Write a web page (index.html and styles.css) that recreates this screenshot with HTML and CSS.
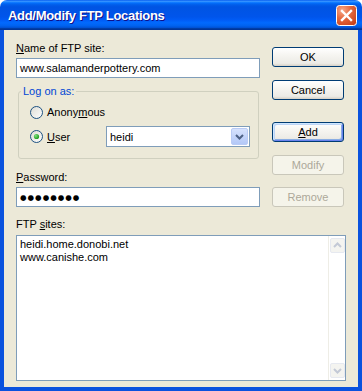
FILE: index.html
```html
<!DOCTYPE html>
<html>
<head>
<meta charset="utf-8">
<title>Add/Modify FTP Locations</title>
<link rel="stylesheet" href="styles.css">
</head>
<body>
<div class="window">
  <div class="titlebar">
    <span class="title">Add/Modify FTP Locations</span>
    <button class="close" aria-label="Close">
      <svg width="21" height="21" viewBox="0 0 21 21">
        <defs>
          <radialGradient id="cg" cx="0.3" cy="0.25" r="0.9">
            <stop offset="0" stop-color="#F7A98A"/>
            <stop offset="0.45" stop-color="#E5693F"/>
            <stop offset="1" stop-color="#C8401A"/>
          </radialGradient>
        </defs>
        <rect x="0.5" y="0.5" width="20" height="20" rx="3" fill="url(#cg)" stroke="#fff"/>
        <path d="M6 6L15 15M15 6L6 15" stroke="#fff" stroke-width="2.4" stroke-linecap="square"/>
      </svg>
    </button>
  </div>
  <div class="frame">
    <div class="top">
      <div class="form">
        <label class="lbl lbl-name"><u>N</u>ame of FTP site:</label>
        <div class="field">www.salamanderpottery.com</div>
        <fieldset class="group">
          <legend>Log on as:</legend>
          <div class="group-body">
            <div class="radio-row">
              <svg class="radio" width="13" height="13" viewBox="0 0 13 13">
                <defs>
                  <linearGradient id="rg" x1="0" y1="0" x2="1" y2="1">
                    <stop offset="0" stop-color="#DCDBD3"/>
                    <stop offset="1" stop-color="#FFFFFF"/>
                  </linearGradient>
                </defs>
                <circle cx="6.5" cy="6.5" r="6" fill="url(#rg)" stroke="#1C5180"/>
              </svg>
              <span>Anony<u>m</u>ous</span>
            </div>
            <div class="radio-row user-row">
              <svg class="radio" width="13" height="13" viewBox="0 0 13 13">
                <defs>
                  <radialGradient id="dg" cx="0.35" cy="0.35" r="0.7">
                    <stop offset="0" stop-color="#7EE07E"/>
                    <stop offset="1" stop-color="#1A9A1A"/>
                  </radialGradient>
                </defs>
                <circle cx="6.5" cy="6.5" r="6" fill="url(#rg)" stroke="#1C5180"/>
                <circle cx="6.5" cy="6.5" r="2.6" fill="url(#dg)"/>
              </svg>
              <span class="user-lbl"><u>U</u>ser</span>
              <div class="combo">
                <span class="combo-text">heidi</span>
                <span class="dd">
                  <svg width="15" height="15" viewBox="0 0 15 15">
                    <path d="M4 6L7.5 9.5L11 6" fill="none" stroke="#4D6185" stroke-width="2"/>
                  </svg>
                </span>
              </div>
            </div>
          </div>
        </fieldset>
        <label class="lbl lbl-pw"><u>P</u>assword:</label>
        <div class="field pw"><span class="dots">●●●●●●●●</span></div>
      </div>
      <div class="buttons">
        <button class="btn b-ok">OK</button>
        <button class="btn b-cancel">Cancel</button>
        <button class="btn b-add focus"><u>A</u>dd</button>
        <button class="btn b-modify" disabled>Modify</button>
        <button class="btn b-remove" disabled>Remove</button>
      </div>
    </div>
    <label class="lbl lbl-sites">FTP <u>s</u>ites:</label>
    <div class="list">
      <div class="items">
        <div class="item">heidi.home.donobi.net</div>
        <div class="item">www.canishe.com</div>
      </div>
      <div class="scrollbar">
        <span class="sb-btn">
          <svg width="13" height="13" viewBox="0 0 13 13"><path d="M3 8L6.5 4.5L10 8" fill="none" stroke="#C3C9D6" stroke-width="2"/></svg>
        </span>
        <span class="sb-btn">
          <svg width="13" height="13" viewBox="0 0 13 13"><path d="M3 5L6.5 8.5L10 5" fill="none" stroke="#C3C9D6" stroke-width="2"/></svg>
        </span>
      </div>
    </div>
  </div>
</div>
</body>
</html>
```

FILE: styles.css
```css
* { box-sizing: border-box; }
html, body { margin: 0; padding: 0; background: #ffffff; }
body {
  font-family: "Liberation Sans", Arial, sans-serif;
  font-size: 11px;
  color: #000;
}
u { text-decoration: underline; text-underline-offset: 1px; }

.window {
  width: 362px;
  height: 391px;
  display: flex;
  flex-direction: column;
}

.titlebar {
  flex: none;
  height: 30px;
  display: flex;
  align-items: center;
  justify-content: space-between;
  padding: 1px 5px 0 8px;
  border-radius: 7px 7px 0 0;
  background: linear-gradient(to bottom,
    #0058EE 0%, #3A93FF 4%, #288EFF 6%, #127DFF 8%, #036FFC 10%,
    #0262EE 14%, #0057E5 20%, #0054E3 24%, #0055EB 56%, #005BF5 66%,
    #026AFE 76%, #0062EF 86%, #0052D6 92%, #0040AB 94%, #003092 100%);
}
.title {
  color: #fff;
  font-weight: bold;
  font-size: 13px;
  letter-spacing: -0.3px;
  text-shadow: 1px 1px #0F1089;
}
.close {
  width: 21px;
  height: 21px;
  padding: 0;
  border: 0;
  background: none;
  display: block;
  margin-top: -1px;
}
.close svg { display: block; }

.frame {
  flex: 1;
  background: #ECE9D8;
  border: 4px solid #0A52DE;
  border-top: 0;
  padding: 11px 12px 6px 12px;
  display: flex;
  flex-direction: column;
}

.top { display: flex; gap: 12px; }
.form { width: 244px; display: flex; flex-direction: column; }
.buttons { width: 72px; display: flex; flex-direction: column; }

.lbl { display: block; line-height: 14px; height: 14px; }
.field {
  margin-top: 3px;
  height: 20px;
  border: 1px solid #7F9DB9;
  background: #fff;
  padding: 0 3px;
  display: flex;
  align-items: center;
}
.pw .dots { font-family: "DejaVu Sans", sans-serif; font-size: 7.5px; letter-spacing: 1px; }

.group {
  margin: 7px 1px 0 2px;
  padding: 0;
  border: 1px solid #D0D0BF;
  border-radius: 3px;
  min-width: 0;
}
.group legend {
  color: #0046D5;
  padding: 0 2px;
  margin-left: 2px;
  line-height: 13px;
}
.group-body {
  padding: 4px 8px 11px 11px;
  display: flex;
  flex-direction: column;
  gap: 4px;
}
.radio-row { display: flex; align-items: center; gap: 4px; height: 20px; }
.radio { display: block; flex: none; }
.user-row { height: 21px; }
.user-lbl { flex: 1; }
.combo {
  width: 144px;
  height: 21px;
  border: 1px solid #7F9DB9;
  background: #fff;
  display: flex;
  align-items: center;
  padding-left: 3px;
}
.combo-text { flex: 1; }
.dd {
  width: 17px;
  height: 17px;
  margin-right: 1px;
  border: 1px solid #B9CBF5;
  border-radius: 2px;
  background: linear-gradient(to bottom, #D6E2FD, #B3C8F7);
  display: flex;
  align-items: center;
  justify-content: center;
}
.dd svg { display: block; }

.lbl-pw { margin-top: 11px; }

.btn {
  font: inherit;
  color: #000;
  width: 72px;
  height: 20px;
  padding: 0;
  border: 1px solid #003C74;
  border-radius: 3px;
  background: linear-gradient(to bottom, #FFFFFF 0%, #F6F5F1 40%, #ECEBE6 85%, #D6D0C5 100%);
}
.btn.focus {
  box-shadow: inset 1px 1px #CEE7FF, inset -1px -1px #6982EE, inset 2px 2px #BCD4F6, inset -2px -2px #89ADE4;
}
.btn:disabled {
  color: #ACA899;
  border-color: #C9C7BA;
  background: #F5F4EA;
}
.b-ok { margin-top: 6px; }
.b-cancel { margin-top: 13px; }
.b-add { margin-top: 22px; }
.b-modify { margin-top: 13px; }
.b-remove { margin-top: 12px; }

.lbl-sites { margin-top: 10px; }
.list {
  margin-top: 4px;
  flex: 1;
  border: 1px solid #7F9DB9;
  background: #fff;
  display: flex;
}
.items { flex: 1; padding: 2px 3px 0; }
.item { line-height: 13px; }
.scrollbar {
  width: 17px;
  border-left: 1px solid #EEEDE6;
  padding: 2px 1px;
  display: flex;
  flex-direction: column;
  justify-content: space-between;
}
.sb-btn {
  width: 15px;
  height: 15px;
  border: 1px solid #E6E9F0;
  border-radius: 2px;
  background: #F4F4F0;
  display: flex;
  align-items: center;
  justify-content: center;
}
.sb-btn svg { display: block; }
```
